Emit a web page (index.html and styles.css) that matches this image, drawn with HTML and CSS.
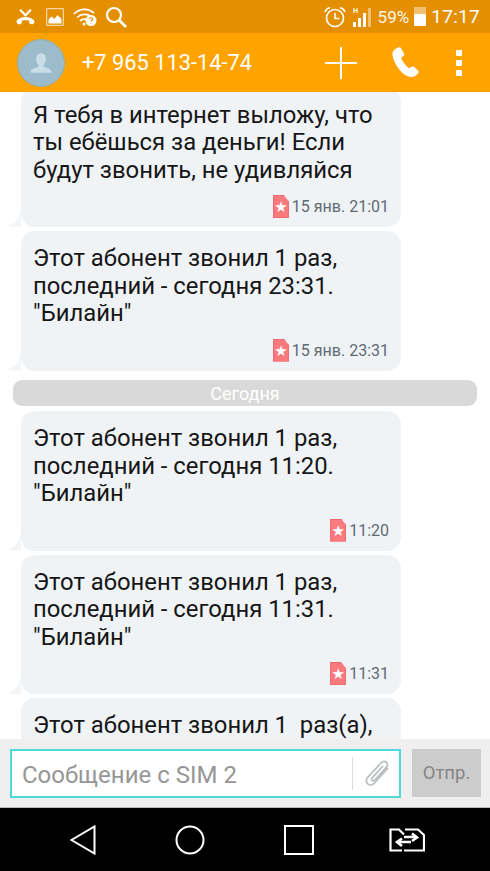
FILE: index.html
```html
<!DOCTYPE html>
<html lang="ru">

<head>
  <meta charset="UTF-8" />
  <meta name="viewport" content="width=device-width, initial-scale=1" />
  <title>Сообщения</title>
  <link rel="stylesheet" href="styles.css">
</head>

<body>
  <div class="status-bar">
    <div class="status-group">
      <svg class="st-missed" viewBox="0 0 22 20" aria-hidden="true">
        <path d="M5 2l6 6 6-6" fill="none" stroke="#fff" stroke-width="2.400" />
        <path d="M1 15c0-2 5-5 10-5s10 3 10 5c0 1-1 3-2 3-2 0-4-1-4-2l0-2c-2-.6-6-.6-8 0v2c0 1-2 2-4 2-1 0-2-2-2-3z" fill="#fff" />
      </svg>
      <svg class="st-pic" viewBox="0 0 18 18" aria-hidden="true">
        <rect x="0.700" y="0.700" width="16.600" height="16.600" fill="none" stroke="#fff" stroke-width="1" opacity="0.800" />
        <path d="M2.500 15.500v-4l3-3 3 2.500 3-4 4 4v4.500z" fill="#fff" />
      </svg>
      <svg class="st-wifi" viewBox="0 0 24 18" aria-hidden="true">
        <path d="M1 6c6-6 14-6 20-1M4 9.500c4-4 10-4 14-1M7 13c2-2 5-2 7-1" fill="none" stroke="#fff" stroke-width="1.700" />
        <circle cx="11" cy="16" r="1.500" fill="#fff" />
        <circle cx="18" cy="12.500" r="5.500" fill="#fff" />
        <path d="M16.300 11c.3-1.700 3.500-1.700 3.500 0 0 1.300-1.800 1.300-1.800 2.600M18 15v.6" fill="none" stroke="#e38f00" stroke-width="1.200" />
      </svg>
      <svg class="st-search" viewBox="0 0 22 22" aria-hidden="true">
        <circle cx="9" cy="9" r="7" fill="none" stroke="#fff" stroke-width="2.200" />
        <path d="M14 14l7 7" stroke="#fff" stroke-width="2.800" />
      </svg>
    </div>
    <div class="status-group status-right">
      <svg class="st-alarm" viewBox="0 0 22 22" aria-hidden="true">
        <circle cx="11" cy="12" r="8.500" fill="none" stroke="#fff" stroke-width="1.600" />
        <path d="M11 7v5.500h4.500" fill="none" stroke="#fff" stroke-width="1.500" />
        <path d="M1 6c1-3 3-4 5-4.500M21 6c-1-3-3-4-5-4.500" fill="none" stroke="#fff" stroke-width="1.600" />
      </svg>
      <svg class="st-signal" viewBox="0 0 20 20" aria-hidden="true">
        <text x="0" y="6" class="st-h">H</text>
        <rect x="0" y="15" width="3" height="5" fill="#fff" />
        <rect x="5" y="11" width="3" height="9" fill="#fff" />
        <rect x="10" y="6" width="3" height="14" fill="#fff" />
        <rect x="15" y="1" width="3" height="19" fill="#fff" opacity="0.450" />
      </svg>
      <span class="st-percent">59%</span>
      <span class="st-battery"><span class="st-battery-fill"></span></span>
      <span class="st-time">17:17</span>
    </div>
  </div>

  <header class="app-bar">
    <div class="avatar">
      <svg viewBox="0 0 24 24" aria-hidden="true">
        <path d="M12 3c3 0 4.500 2.500 4.500 5 0 2.500-1 4.500-2 5.500v2c2 1 7 1.500 7 4.500v1H2.500v-1c0-3 5-3.500 7-4.500v-2c-1-1-2-3-2-5.500 0-2.500 1.500-5 4.500-5z" fill="#c9dde6" />
      </svg>
    </div>
    <div class="contact">+7 965 113-14-74</div>
    <svg class="bar-plus" viewBox="0 0 32 32" aria-hidden="true">
      <path d="M16 0v32M0 16h32" stroke="#fff" stroke-width="2" />
    </svg>
    <svg class="bar-phone" viewBox="0 0 30 32" aria-hidden="true">
      <path d="M7 0.500c1.500-.6 2.500 0 3 1l3 5.500c.5 1-.2 2-1 2.600l-2 1.600c1 3.500 5 9 8.500 10.800l2.200-1.500c1-.6 2-.6 2.800.2l4 3.800c.8.800.8 1.700 0 2.500-2 2-4 4-7 4C11 31 1 15 1 7c0-3 3-5.500 6-6.500z" fill="#fff" />
    </svg>
    <div class="bar-dots"><span></span><span></span><span></span></div>
  </header>

  <main class="thread">
    <article class="bubble first">
      <p>Я тебя в интернет выложу, что ты ебёшься за деньги! Если будут звонить, не удивляйся</p>
      <div class="meta"><span class="sim-icon">★</span>15 янв. 21:01</div>
    </article>
    <article class="bubble">
      <p>Этот абонент звонил 1 раз, последний - сегодня 23:31. "Билайн"</p>
      <div class="meta"><span class="sim-icon">★</span>15 янв. 23:31</div>
    </article>
    <div class="date-sep">Сегодня</div>
    <article class="bubble">
      <p>Этот абонент звонил 1 раз, последний - сегодня 11:20. "Билайн"</p>
      <div class="meta"><span class="sim-icon">★</span>11:20</div>
    </article>
    <article class="bubble">
      <p>Этот абонент звонил 1 раз, последний - сегодня 11:31. "Билайн"</p>
      <div class="meta"><span class="sim-icon">★</span>11:31</div>
    </article>
    <article class="bubble">
      <p>Этот абонент звонил 1&nbsp; раз(а),</p>
    </article>
  </main>

  <div class="composer">
    <div class="input-box">
      <span class="placeholder">Сообщение с SIM 2</span>
      <span class="input-divider"></span>
      <svg class="clip" viewBox="0 0 28 30" aria-hidden="true">
        <path d="M24 9L10.500 24c-2 2.200-5 2.400-6.800.8-1.800-1.600-1.800-4.400.2-6.600L17 4c1.500-1.700 3.800-2 5.300-.7 1.500 1.300 1.400 3.500 0 5.100L10.800 21c-.8.900-2 1-2.700.4-.7-.6-.7-1.700.1-2.600L19 7" fill="none" stroke="#b9bfc1" stroke-width="1.800" />
      </svg>
    </div>
    <button class="send-btn">Отпр.</button>
  </div>

  <nav class="nav-bar">
    <svg class="nav-back" viewBox="0 0 26 30" aria-hidden="true">
      <path d="M24.500 1.500v27L1.500 15z" fill="none" stroke="#fff" stroke-width="2" />
    </svg>
    <svg class="nav-home" viewBox="0 0 30 30" aria-hidden="true">
      <circle cx="15" cy="15" r="13.500" fill="none" stroke="#fff" stroke-width="2" />
    </svg>
    <svg class="nav-recent" viewBox="0 0 30 30" aria-hidden="true">
      <rect x="1" y="1" width="28" height="28" fill="none" stroke="#fff" stroke-width="2" />
    </svg>
    <svg class="nav-switch" viewBox="0 0 36 24" aria-hidden="true">
      <path d="M15 6.500L10 1.500H1.500V22.500H13M16 1.500H29L35 7V22.500H15" fill="none" stroke="#fff" stroke-width="2.200" />
      <path d="M15 9H27M23 5.500L28 9.500L23 13M22 14H9M13 10.500L8 14L13 18" fill="none" stroke="#fff" stroke-width="2.600" />
    </svg>
  </nav>
</body>

</html>
```

FILE: styles.css
```css
* {
  box-sizing: border-box;
}

body {
  font-family: Roboto, "Liberation Sans", sans-serif;
  margin: 0;
  width: 490px;
  height: 871px;
  overflow: hidden;
  background: #fff;
  display: flex;
  flex-direction: column;
}

svg {
  display: block;
  flex: none;
}

/* Status bar */
.status-bar {
  height: 33px;
  background: #e38f00;
  color: #fff;
  display: flex;
  justify-content: space-between;
  align-items: center;
  padding: 0 10px 0 15px;
}

.status-group {
  display: flex;
  align-items: center;
}

.st-missed {
  width: 21px;
  height: 18px;
}

.st-pic {
  width: 18px;
  height: 18px;
  margin-left: 10px;
}

.st-wifi {
  width: 24px;
  height: 18px;
  margin-left: 9px;
}

.st-search {
  width: 22px;
  height: 22px;
  margin-left: 8px;
}

.st-alarm {
  width: 22px;
  height: 22px;
}

.st-signal {
  width: 20px;
  height: 20px;
  margin-left: 7px;
}

.st-h {
  font-family: "Liberation Sans", sans-serif;
  font-size: 7px;
  font-weight: 700;
  fill: #fff;
}

.st-percent {
  font-size: 17px;
  margin-left: 5px;
  opacity: 0.92;
}

.st-battery {
  width: 12px;
  height: 19px;
  margin-left: 5px;
  background: #f0c070;
  display: flex;
  align-items: flex-end;
}

.st-battery-fill {
  display: block;
  width: 100%;
  height: 12px;
  background: #fff;
}

.st-time {
  font-size: 19px;
  margin-left: 5px;
  letter-spacing: 0.3px;
}

/* App bar */
.app-bar {
  height: 59px;
  background: #ffa300;
  display: flex;
  align-items: center;
  padding-left: 17px;
  color: #fff;
}

.avatar {
  width: 48px;
  height: 48px;
  border-radius: 50%;
  background: #9dbccb;
  border: 1px solid #97ae9f;
  display: flex;
  align-items: center;
  justify-content: center;
}

.avatar svg {
  width: 26px;
  height: 26px;
}

.contact {
  font-size: 21.800px;
  margin-left: 17px;
  width: 243px;
}

.bar-plus {
  width: 32px;
  height: 32px;
}

.bar-phone {
  width: 30px;
  height: 31px;
  margin-left: 34px;
}

.bar-dots {
  margin-left: 35px;
  display: flex;
  flex-direction: column;
  gap: 4px;
}

.bar-dots span {
  display: block;
  width: 6px;
  height: 6px;
  border-radius: 1px;
  background: #fff;
}

/* Messages */
.thread {
  flex: 1;
  min-height: 0;
  overflow: hidden;
  display: flex;
  flex-direction: column;
  padding: 0 13px;
}

.bubble {
  flex: none;
  position: relative;
  width: 380px;
  height: 139.500px;
  margin: 0 0 4px 8px;
  padding: 14px 12px 0;
  background: #f0f3f6;
  border-radius: 14px;
  color: #161616;
}

.bubble::before {
  content: "";
  position: absolute;
  left: -13px;
  bottom: 0;
  width: 16px;
  height: 20px;
  background: #f3f5f7;
  clip-path: path("M13 0 V20 H6 C3 20 1 19.500 0 18 C6 17 12 12 13 0 Z");
}

.bubble.first {
  margin-top: -4.500px;
}

.bubble p {
  margin: 0;
  font-size: 23.850px;
  line-height: 27.500px;
}

.meta {
  position: absolute;
  right: 12px;
  bottom: 9px;
  display: flex;
  align-items: center;
  font-size: 16px;
  color: #5f6a72;
}

.sim-icon {
  width: 16px;
  height: 23px;
  margin-right: 3px;
  background: #fb7a7e;
  border: 1px solid #ef6a70;
  clip-path: polygon(0 0, 68% 0, 100% 28%, 100% 100%, 0 100%);
  color: #fff;
  font-family: "DejaVu Sans", sans-serif;
  font-size: 15px;
  line-height: 23px;
  text-align: center;
  display: flex;
  justify-content: center;
}

.date-sep {
  flex: none;
  height: 26px;
  margin: 5.500px 0 5px;
  background: #d9d9d9;
  border-radius: 9px;
  color: #fff;
  font-size: 18px;
  line-height: 27px;
  text-align: center;
}

/* Composer */
.composer {
  flex: none;
  height: 69px;
  background: #eeefee;
  border-bottom: 1px solid #bbb;
  display: flex;
  align-items: flex-start;
  padding: 10px 9px 0 10px;
  justify-content: space-between;
}

.input-box {
  width: 391px;
  height: 49px;
  background: #fff;
  border: 2px solid #4ddad9;
  display: flex;
  align-items: center;
  padding-left: 10px;
}

.placeholder {
  font-size: 24px;
  line-height: 30px;
  padding-top: 3px;
  color: #969696;
  width: 330px;
}

.input-divider {
  width: 1px;
  height: 33px;
  background: #dcdcdc;
}

.clip {
  width: 28px;
  height: 30px;
  margin-left: 11px;
}

.send-btn {
  width: 69px;
  height: 48px;
  border: none;
  padding: 0;
  background: #cccccc;
  color: #858585;
  font-family: inherit;
  font-size: 18.500px;
}

/* Navigation */
.nav-bar {
  flex: none;
  height: 63px;
  background: #000;
  position: relative;
  display: flex;
  align-items: center;
  padding-left: 70px;
}

.nav-back {
  width: 26px;
  height: 30px;
}

.nav-home {
  width: 30px;
  height: 30px;
  margin-left: 79px;
}

.nav-recent {
  width: 30px;
  height: 30px;
  margin-left: 79px;
}

.nav-switch {
  width: 36px;
  height: 24px;
  margin-left: 75px;
}
```
